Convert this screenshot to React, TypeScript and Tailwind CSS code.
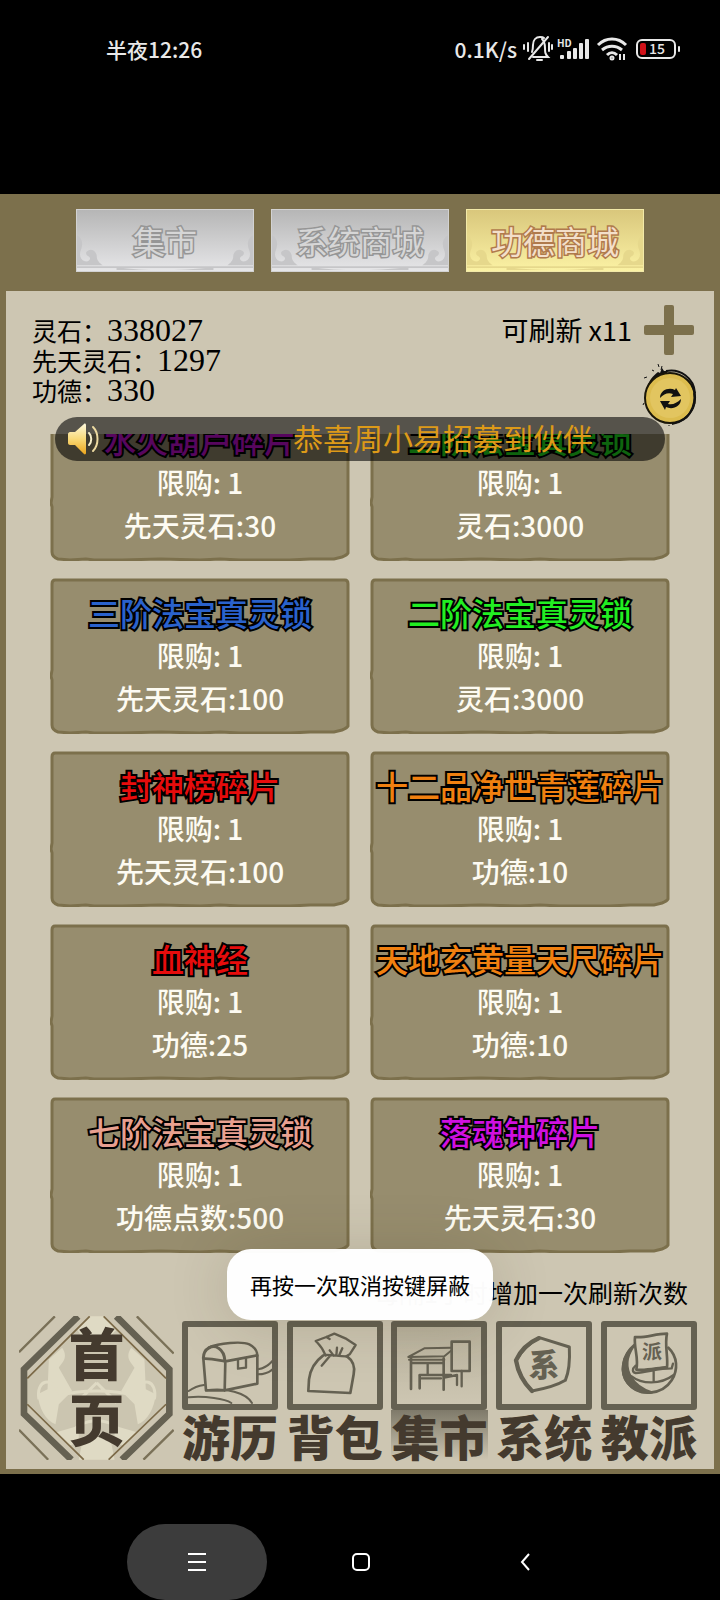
import type { ReactNode } from "react";
import clsx from "clsx";

interface Item {
  name: string;
  color: string;
  price: string;
}

const TABS = ["集市", "系统商城", "功德商城"];

const RESOURCES = [
  { label: "灵石", value: "338027" },
  { label: "先天灵石", value: "1297" },
  { label: "功德", value: "330" },
];

const ITEMS: Item[] = [
  { name: "水火葫芦碎片", color: "text-[#d010e0]", price: "先天灵石:30" },
  { name: "二阶法宝真灵锁", color: "text-[#22ee22]", price: "灵石:3000" },
  { name: "三阶法宝真灵锁", color: "text-[#2a62cc]", price: "先天灵石:100" },
  { name: "二阶法宝真灵锁", color: "text-[#22ee22]", price: "灵石:3000" },
  { name: "封神榜碎片", color: "text-[#e60c0c]", price: "先天灵石:100" },
  { name: "十二品净世青莲碎片", color: "text-[#f08010]", price: "功德:10" },
  { name: "血神经", color: "text-[#e60c0c]", price: "功德:25" },
  { name: "天地玄黄量天尺碎片", color: "text-[#f08010]", price: "功德:10" },
  { name: "七阶法宝真灵锁", color: "text-[#e8a090]", price: "功德点数:500" },
  { name: "落魂钟碎片", color: "text-[#d010e0]", price: "先天灵石:30" },
];

const NAV = [
  { label: "游历", icon: <ChestIcon /> },
  { label: "背包", icon: <BagIcon /> },
  { label: "集市", icon: <StallIcon />, active: true },
  { label: "系统", icon: <SystemIcon /> },
  { label: "教派", icon: <SectIcon /> },
];

export default function App() {
  return (
    <div className="flex min-h-screen flex-col bg-black font-['Noto_Sans_CJK_SC',sans-serif]">
      <StatusBar />
      <main className="relative border-x-6 border-b-5 border-[#7c704c] bg-[#cdc6b2]">
        <div className="grid grid-cols-3 gap-[17px] bg-[#7c704c] px-[70px] pt-[15px] pb-[19px]">
          {TABS.map((t, i) => (
            <ShopTab key={t} label={t} active={i === 2} />
          ))}
        </div>

        <div className="flex h-[143px] justify-between pt-2.5 pr-4 pl-[26px]">
          <dl className="pt-3.5 text-black">
            {RESOURCES.map((r) => (
              <div key={r.label} className="flex h-[30px] items-center">
                <dt className="text-[25px] leading-[30px]">{r.label}：</dt>
                <dd className="font-['Liberation_Serif',serif] text-[32px] leading-[30px]">
                  {r.value}
                </dd>
              </div>
            ))}
          </dl>
          <div className="flex flex-col items-end">
            <div className="flex items-center gap-2">
              <span className="text-[27px] text-black">可刷新 x11</span>
              <button aria-label="增加刷新次数" className="p-1">
                <svg viewBox="0 0 50 50" className="size-[50px] fill-[#7c704c]">
                  <rect x="20" y="0" width="10" height="50" rx="2" />
                  <rect x="0" y="20" width="50" height="10" rx="2" />
                </svg>
              </button>
            </div>
            <button aria-label="刷新" className="mt-1">
              <RefreshIcon />
            </button>
          </div>
        </div>

        <section className="relative">
          <div className="overflow-hidden">
            <ul className="-mt-[29px] grid grid-cols-2 gap-x-5 gap-y-[17px] px-11">
              {ITEMS.map((item, i) => (
                <li key={i}>
                  <ItemCard item={item} />
                </li>
              ))}
            </ul>
          </div>
          <div className="absolute inset-x-[49px] -top-[17px] flex h-11 items-center overflow-hidden rounded-full bg-black/58 pl-3">
            <SpeakerIcon />
            <p className="ml-[194px] pb-1 text-[30px] leading-10 whitespace-nowrap text-[#dd9a18]">
              恭喜周小易招募到伙伴
            </p>
          </div>
        </section>

        <p className="mt-[21px] pr-[26px] text-right text-[25px] leading-9 text-black">
          每隔1小时增加一次刷新次数
        </p>

        <nav className="mt-1.5 flex gap-[7px] pr-4 pb-[9px] pl-[13px]">
          <HomeButton />
          <div className="grid flex-1 grid-cols-5 gap-[7px] pt-[5px]">
            {NAV.map((n) => (
              <button key={n.label} className="flex flex-col items-center">
                <span
                  className={clsx(
                    "block h-[89px] w-full max-w-24 rounded-[3px] border-6 border-[#656152]",
                    n.active && "bg-linear-to-b from-[#b9b29d] to-[#cdc6b2]"
                  )}
                >
                  {n.icon}
                </span>
                <span
                  className={clsx(
                    "w-full text-[48px] leading-[50px] font-black whitespace-nowrap text-[#443a2e]",
                    n.active && "bg-linear-to-b from-[#7f7a6a] to-[#cdc6b2]"
                  )}
                >
                  {n.label}
                </span>
              </button>
            ))}
          </div>
        </nav>

        <div
          role="status"
          className="absolute bottom-[149px] left-1/2 -translate-x-1/2 rounded-3xl bg-white/98 px-[23px] text-[22px] leading-[71px] whitespace-nowrap text-black shadow-[0_4px_60px_rgba(60,50,20,0.18)]"
        >
          再按一次取消按键屏蔽
        </div>
      </main>
      <SystemNav />
    </div>
  );
}

function StatusBar() {
  return (
    <header className="flex h-[194px] items-start justify-between pt-[31px] pr-[37px] pl-[106px] text-[21px] leading-9 font-medium text-[#e8e8e8]">
      <time>半夜12:26</time>
      <div className="flex h-9 items-center gap-1.5">
        <span>0.1K/s</span>
        <svg viewBox="0 0 160 42" className="h-[42px] w-[160px]" aria-hidden="true">
          <g fill="none" stroke="#e8e8e8" strokeWidth="2" strokeLinecap="round">
            <path d="M10 29h15c-3-3-3-5-3-9 0-4-1-7-3-9M9 24c1-3 1-5 1-7 0-5 3-8 7-8 2 0 3 0 4 1" />
            <path d="M6 31 25 9M14 32h5M5 15v8M1 17v4M26 15v8M29 17v4" />
          </g>
          <g fill="#e8e8e8">
            <rect x="37" y="27" width="4" height="4" rx="1" />
            <rect x="44" y="23" width="4" height="8" rx="1" />
            <rect x="50" y="20" width="4" height="11" rx="1" />
            <rect x="56" y="15" width="4" height="16" rx="1" />
            <rect x="62" y="11" width="4" height="20" rx="1" />
            <text x="34" y="19" fontSize="10" fontWeight="700">HD</text>
          </g>
          <g fill="none" stroke="#e8e8e8" strokeWidth="3">
            <path d="M75 17c8-8 20-8 28 0M79 22c6-5 14-5 20 0M84 27c3-3 7-3 10 0" />
            <circle cx="89" cy="30" r="1" />
            <path d="M97 26v6M101 26v6" strokeWidth="2" />
          </g>
          <rect x="114" y="12" width="38" height="18" rx="5" fill="none" stroke="#e8e8e8" strokeWidth="2" />
          <rect x="117" y="15" width="6" height="12" rx="2" fill="#d01018" />
          <rect x="155" y="18" width="2" height="6" rx="1" fill="#e8e8e8" />
          <text x="126" y="26" fontSize="14" fill="#e8e8e8">15</text>
        </svg>
      </div>
    </header>
  );
}

function ShopTab({ label, active }: { label: string; active: boolean }) {
  return (
    <button
      className={clsx(
        "relative h-[63px] border text-[32px] leading-[61px] [paint-order:stroke_fill]",
        active
          ? "border-[#f2e9a8] bg-linear-to-b from-[#d9c77c] to-[#fbf2a4] text-[#f3dfca] [-webkit-text-stroke:3px_#b07a4c]"
          : "border-[#d2d2d2] bg-linear-to-b from-[#b6b6b6] to-[#e6e6e8] text-[#d6d6d6] [-webkit-text-stroke:3px_#969696]"
      )}
    >
      <svg
        viewBox="0 0 178 63"
        preserveAspectRatio="none"
        aria-hidden="true"
        className={clsx("absolute inset-0 size-full", active ? "fill-[#e6d88c]" : "fill-[#c6c6c8]")}
      >
        <path d="M0 26c6 3 6 10 4 15-2 5-1 10 4 12 4 1 7-3 4-5-3-1-4-5-1-6 5-3 9 2 9 6 0 4 3 7 6 9H0z" />
        <path d="M178 26c-6 3-6 10-4 15 2 5 1 10-4 12-4 1-7-3-4-5 3-1 4-5 1-6-5-3-9 2-9 6 0 4-3 7-6 9h26z" />
        <path d="M0 58h178v2H0z" />
        <path d="M40 59c30 4 60 4 98 0v3H40z" />
      </svg>
      <span className="relative">{label}</span>
    </button>
  );
}

function ItemCard({ item }: { item: Item }) {
  return (
    <button className="relative block w-full pt-[13px] pb-[14px] text-[28px] leading-[43px] font-medium text-[#fdfbf2]">
      <svg
        viewBox="0 0 300 156"
        preserveAspectRatio="none"
        aria-hidden="true"
        className="absolute inset-0 size-full fill-[#978d6e] stroke-[#7c704c]"
        strokeWidth="3"
      >
        <path d="M5 2H295Q298 2 298 6V148Q297 150 292 152L284 154H260L240 155H190L170 154 150 155 110 154 72 155H44L36 154 20 155 8 154Q2 152 2 147V102L1 98 2 92V6Q2 2 5 2Z" />
      </svg>
      <span
        className={clsx(
          "relative block text-[32px] whitespace-nowrap [-webkit-text-stroke:4px_#000] [paint-order:stroke_fill]",
          item.color
        )}
      >
        {item.name}
      </span>
      <span className="relative block">限购: 1</span>
      <span className="relative block">{item.price}</span>
    </button>
  );
}

function HomeButton() {
  return (
    <button className="relative flex h-36 w-[155px] flex-col items-center pt-0.5 text-[56px] leading-[66px] font-black text-[#443a2e]">
      <svg viewBox="0 0 467 432" className="absolute inset-0 size-full" fill="none" aria-hidden="true">
        <path d="M213 0h42l188 187v78L270 432h-75L25 265v-78z" fill="#cbc5b0" />
        <g fill="#dfdac4">
          <path d="M213 0h42l40 40-30 30h-70l-20-30zM90 130l40-35c20 30 0 45-10 60l40 70-40 40-10 60c-30-10-50-50-54-90l30-15zM378 130l-40-35c-20 30 0 45 10 60l-40 70 40 40 10 60c30-10 50-50 54-90l-30-15z" />
          <path d="M180 432l10-50 44-20 44 20 10 50zM110 350l70-20v50l-30 10zM358 350l-70-20v50l30 10z" />
        </g>
        <path d="M60 250c-10-60 40-70 60-20M408 250c10-60-40-70-60-20M120 240c60-20 170-20 230 0M234 200l-60 60M234 200l60 60M150 360c40-60 130-60 168 0" stroke="#dfdac4" strokeWidth="9" />
        <path d="M178 0 15 160v134l143 138M293 0l160 160v134L310 432" stroke="#656152" strokeWidth="20" />
        <path d="M213 0 25 187M25 265l170 167M255 0l188 187M443 265 270 432" stroke="#7c6a48" strokeWidth="5" />
        <path d="M108 0 0 108M355 0l111 112M0 342l88 90M466 342l-91 90" stroke="#7a7158" strokeWidth="7" />
      </svg>
      <span className="relative">首</span>
      <span className="relative">页</span>
    </button>
  );
}

function NavDrawing({ children }: { children: ReactNode }) {
  return (
    <svg
      viewBox="18 18 252 231"
      className="size-full"
      fill="none"
      stroke="#656152"
      strokeWidth="7"
      strokeLinecap="round"
      strokeLinejoin="round"
      aria-hidden="true"
    >
      {children}
    </svg>
  );
}

function ChestIcon() {
  return (
    <NavDrawing>
      <path d="M64 112c0-32 30-42 46-30 14 9 18 24 19 39" strokeWidth="9" />
      <path d="M80 80c30-14 100-20 122-10 18 9 24 22 24 34" />
      <path d="M64 113c30-1 46 5 66 8l96-18v85l-98 20-56 0-8-96M130 121l-2 88" strokeWidth="8" />
      <path d="M168 116v27l24-3v-28" />
      <path d="M228 145c22-4 34-14 44-26M228 160c20 0 34-6 44-15M20 210c14-10 30-16 46-18M72 208c60-8 120 6 138 38M20 229c50-5 110 5 128 17" strokeWidth="6" />
    </NavDrawing>
  );
}

function BagIcon() {
  return (
    <NavDrawing>
      <path d="M116 104c-4-10-12-26-24-38l-6-6 32-12 24-10 33 14 31 20-18 28-10 6M118 48l10 6" />
      <path d="M108 104c-22 16-38 41-42 71l-2 35 126 6 10-56c4-20 0-40-20-54" strokeWidth="8" />
      <path d="M112 102c23-2 48 6 70 4M128 88l12 16M150 80l-2 24M166 82l-10 22M104 134l24-28" />
    </NavDrawing>
  );
}

function StallIcon() {
  return (
    <NavDrawing>
      <path d="m52 108 48-26 80-2M52 108l108-2 22-18M54 116h106" strokeWidth="6" />
      <path d="M60 112v92M158 112v94M86 164v38" strokeWidth="8" />
      <path d="M64 126h92M110 128v34M86 162h94M90 172h60M160 170l38-8v30M212 150v46" />
      <path d="M182 62h54v88h-54z" strokeWidth="8" />
    </NavDrawing>
  );
}

function SystemIcon() {
  return (
    <NavDrawing>
      <path d="M130 50 220 78c2 40-1 75-12 100-30 18-60 25-100 32-25-25-42-55-48-92 15-25 40-52 70-68z" strokeWidth="9" />
      <path d="M128 52c-32 14-56 40-68 66 6 37 23 67 48 92" strokeWidth="13" />
      <text x="144" y="166" textAnchor="middle" fontSize="92" fontWeight="900" fill="#656152" stroke="none">
        系
      </text>
    </NavDrawing>
  );
}

function SectIcon() {
  return (
    <NavDrawing>
      <path d="M100 72c-34 28-46 80-20 114 34 44 104 36 132-8 20-32 18-72-10-98" strokeWidth="8" />
      <path d="M96 78c-34 28-40 80-16 108 18 22 46 32 72 28-30-10-48-22-62-46-16-28-14-60 6-90z" fill="#656152" />
      <path d="M102 48c30 4 60-10 96-10-8 34 4 70 0 100-30 2-60 12-92 8 8-34-8-66-4-98z" strokeWidth="8" />
      <path d="M104 134c-12 10-10 20 0 22 40-4 70-14 108-14l4-14M92 166c30 24 86 26 126-4M158 152v28" />
      <text x="153" y="115" textAnchor="middle" fontSize="60" fontWeight="700" fill="#656152" stroke="none">
        派
      </text>
    </NavDrawing>
  );
}

function SpeakerIcon() {
  return (
    <svg viewBox="0 0 32 32" className="size-8 shrink-0" fill="none" aria-hidden="true">
      <defs>
        <linearGradient id="gold" x1="0" y1="0" x2="0" y2="1">
          <stop offset="0" stopColor="#fdf8dc" />
          <stop offset="0.5" stopColor="#f8d978" />
          <stop offset="1" stopColor="#eca51c" />
        </linearGradient>
      </defs>
      <path d="M1 11c0-1 1-2 2-2h5L17 1c1-1 2 0 2 1v28c0 1-1 2-2 1L8 22H3c-1 0-2-1-2-2z" fill="url(#gold)" />
      <path d="M22 10c3 3 3 9 0 12" stroke="#f5edc8" strokeWidth="2" strokeLinecap="round" />
      <path d="M26 4c6 6 6 18 0 24" stroke="#ecd9a0" strokeWidth="2" strokeLinecap="round" />
    </svg>
  );
}

function RefreshIcon() {
  return (
    <svg viewBox="0 0 56 64" className="h-16 w-14" fill="none" aria-hidden="true">
      <path d="M16 1l1 3M20 3l-1 4M12 8l-2-1M5 14l-3 1M27 62v1M2 40l-1 2" stroke="#111" strokeWidth="1" />
      <path d="M5 26c1-8 6-13 11-17l2 1 2-5 2 3 4 0-2 3c-8 1-15 8-17 15z" fill="#111" />
      <circle cx="28" cy="35" r="25" fill="#dcbc4e" stroke="#1a1608" strokeWidth="2" />
      <path d="M24 8c14-3 28 7 29 22M50 22c8 16-1 36-20 39M52 30c2 10-3 20-8 25" stroke="#111" strokeWidth="2" />
      <circle cx="28" cy="35" r="20" fill="#e2c560" />
      <path d="M18 35c0-8 9-11 15-8l1-2 5 8-10 1 2-3c-5-2-9 0-13 4zM39 36c0 8-9 11-15 8l-1 3-5-9 10 0-2 3c5 1 9-1 13-5z" fill="#111" />
    </svg>
  );
}

function SystemNav() {
  return (
    <footer className="mt-[50px] grid grid-cols-3 justify-items-center pr-[113px] pl-[115px]">
      <button aria-label="菜单" className="flex h-[76px] w-[140px] items-center justify-center rounded-[38px] bg-[#3c3c3c]">
        <svg viewBox="0 0 18 18" className="size-[18px]" stroke="#fff" strokeWidth="2">
          <path d="M0 1h18M0 9h18M0 17h18" />
        </svg>
      </button>
      <button aria-label="主页" className="flex h-[76px] items-center justify-center">
        <svg viewBox="0 0 18 18" className="size-[18px]" fill="none" stroke="#fff" strokeWidth="2">
          <rect x="1" y="1" width="16" height="16" rx="4" />
        </svg>
      </button>
      <button aria-label="返回" className="flex h-[76px] items-center justify-center">
        <svg viewBox="0 0 10 18" className="h-[18px] w-2.5" fill="none" stroke="#fff" strokeWidth="2">
          <path d="M9 1 2 9l7 8" />
        </svg>
      </button>
    </footer>
  );
}
